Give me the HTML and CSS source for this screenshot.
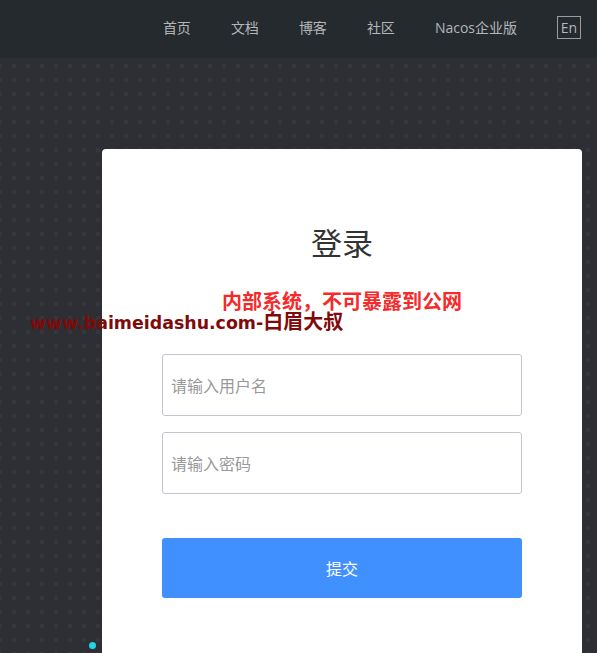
FILE: index.html
```html
<!DOCTYPE html>
<html lang="zh">
<head>
<meta charset="utf-8">
<title>Nacos 登录</title>
<link rel="stylesheet" href="styles.css">
</head>
<body>
<header class="header">
  <nav class="nav">
    <a class="nav-item" href="#">首页</a>
    <a class="nav-item" href="#">文档</a>
    <a class="nav-item" href="#">博客</a>
    <a class="nav-item" href="#">社区</a>
    <a class="nav-item" href="#">Nacos企业版</a>
    <span class="lang">En</span>
  </nav>
</header>
<main class="main">
  <section class="card">
    <h1 class="title">登录</h1>
    <p class="warning">内部系统，不可暴露到公网</p>
    <form class="form">
      <input class="field" type="text" placeholder="请输入用户名">
      <input class="field field-second" type="password" placeholder="请输入密码">
      <button class="submit" type="button">提交</button>
    </form>
  </section>
</main>
<div class="watermark"><span class="wm-latin">www.baimeidashu.com-</span><span class="wm-cjk">白眉大叔</span></div>
<span class="dot"></span>
</body>
</html>
```

FILE: styles.css
```css
* { box-sizing: border-box; }
html, body { margin: 0; padding: 0; }
body {
  width: 597px;
  height: 653px;
  overflow: hidden;
  position: relative;
  font-family: "Noto Sans CJK SC", "Noto Sans", sans-serif;
  background:
    conic-gradient(from 0deg at 4px 4px, #2e2f34 0 75%, #36373c 0) 12px 8px / 14px 14px,
    #2e2f34;
}
.header {
  height: 58px;
  background: #252a2f;
  display: flex;
  justify-content: flex-end;
  align-items: center;
  padding: 0 16px 3px 0;
}
.nav {
  display: flex;
  align-items: center;
  gap: 40px;
}
.nav-item {
  color: #b4b7ba;
  text-decoration: none;
  font-family: "Open Sans", "Noto Sans CJK SC", sans-serif;
  font-size: 14px;
  line-height: 20px;
}
.lang {
  width: 24px;
  height: 23px;
  border: 1px solid #9a9da0;
  color: #b4b7ba;
  font-family: "Open Sans", sans-serif;
  font-size: 14px;
  line-height: 20px;
  display: flex;
  align-items: center;
  justify-content: center;
}
.main {
  display: flex;
  justify-content: flex-end;
  padding: 91px 15px 0 0;
}
.card {
  width: 480px;
  height: 504px;
  background: #fff;
  border-radius: 4px 4px 0 0;
  padding: 73px 60px 0;
  text-align: center;
}
.title {
  margin: 0;
  font-size: 31px;
  font-weight: 400;
  line-height: 40px;
  color: #333;
}
.warning {
  margin: 27px 0 0;
  color: #f52a2a;
  font-size: 20px;
  font-weight: 700;
  line-height: 24px;
}
.form {
  display: flex;
  flex-direction: column;
  margin-top: 41px;
}
.field {
  height: 62px;
  border: 1px solid #c4c6cf;
  border-radius: 3px;
  padding: 0 8px;
  font-family: "Noto Sans CJK SC", sans-serif;
  font-size: 16px;
  color: #333;
  outline: none;
}
.field::placeholder { color: #999; }
.field-second { margin-top: 16px; }
.submit {
  margin-top: 44px;
  height: 60px;
  border: none;
  border-radius: 3px;
  background: #4190ff;
  color: #fff;
  font-family: "Noto Sans CJK SC", sans-serif;
  font-size: 16px;
}
.watermark {
  position: absolute;
  left: 30px;
  top: 310px;
  color: #800a0a;
  font-weight: 700;
  line-height: 22px;
  white-space: nowrap;
}
.wm-latin {
  font-family: "DejaVu Sans", sans-serif;
  font-size: 17.4px;
}
.wm-cjk {
  font-family: "Noto Sans CJK SC", sans-serif;
  font-size: 20px;
}
.dot {
  position: absolute;
  left: 89px;
  top: 642px;
  width: 7px;
  height: 7px;
  border-radius: 50%;
  background: #1fd5e6;
}
```
